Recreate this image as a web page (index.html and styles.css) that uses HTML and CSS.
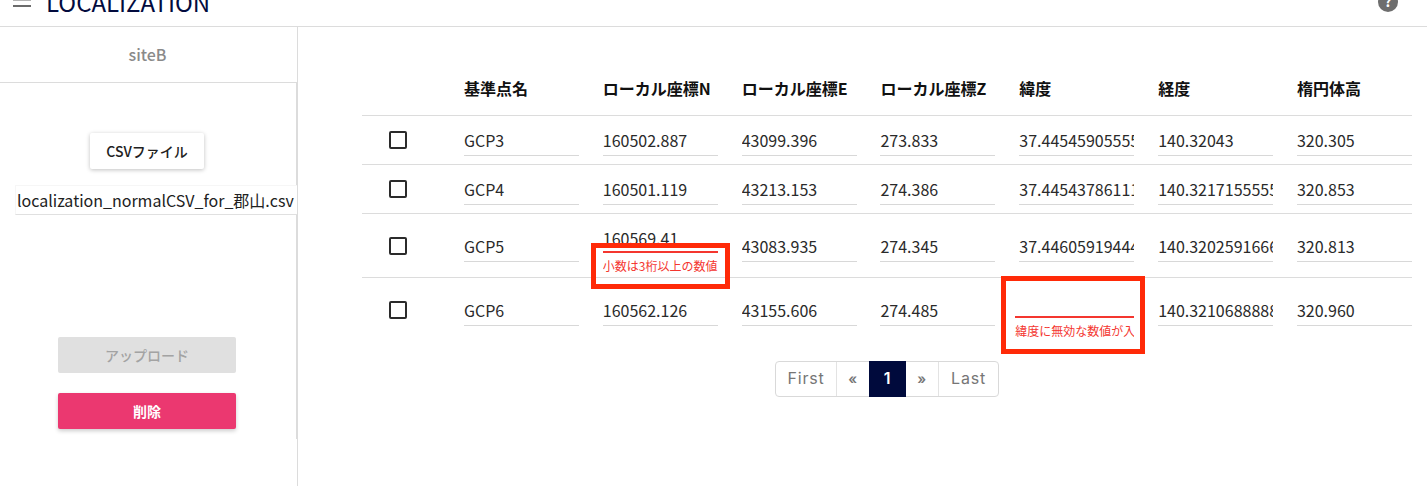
FILE: index.html
```html
<!DOCTYPE html>
<html lang="ja">
<head>
<meta charset="utf-8">
<title>Localization</title>
<link rel="stylesheet" href="styles.css">
</head>
<body>
<header class="topbar">
  <svg class="menu-icon" width="18" height="9" viewBox="0 0 18 9"><path d="M0 0h18v1.5H0zM0 6h18v2H0z" fill="#6b6b6b"/></svg>
  <h1 class="title">LOCALIZATION</h1>
  <svg class="help-icon" width="20" height="20" viewBox="0 0 20 20"><circle cx="10" cy="10" r="10" fill="#6e6e6e"/><text x="10" y="15" text-anchor="middle" class="help-mark">?</text></svg>
</header>
<div class="layout">
  <aside class="sidebar">
    <div class="site-name">siteB</div>
    <div class="side-body">
      <button class="btn-file">CSVファイル</button>
      <div class="file-name">localization_normalCSV_for_郡山.csv</div>
      <button class="btn-wide btn-upload">アップロード</button>
      <button class="btn-wide btn-delete">削除</button>
    </div>
  </aside>
  <main class="main">
    <table class="grid">
      <thead>
        <tr><th class="check-col"></th><th>基準点名</th><th>ローカル座標N</th><th>ローカル座標E</th><th>ローカル座標Z</th><th>緯度</th><th>経度</th><th>楕円体高</th></tr>
      </thead>
      <tbody>
        <tr>
          <td class="check-col"><span class="check"></span></td>
          <td><div class="field">GCP3</div></td><td><div class="field">160502.887</div></td><td><div class="field">43099.396</div></td><td><div class="field">273.833</div></td><td><div class="field">37.44545905555</div></td><td><div class="field">140.32043</div></td><td><div class="field">320.305</div></td>
        </tr>
        <tr>
          <td class="check-col"><span class="check"></span></td>
          <td><div class="field">GCP4</div></td><td><div class="field">160501.119</div></td><td><div class="field">43213.153</div></td><td><div class="field">274.386</div></td><td><div class="field">37.44543786111</div></td><td><div class="field">140.32171555555</div></td><td><div class="field">320.853</div></td>
        </tr>
        <tr class="row-tall">
          <td class="check-col"><span class="check"></span></td>
          <td><div class="field">GCP5</div></td>
          <td class="has-error"><div class="field field-error field-raised">160569.41</div><div class="error-msg">小数は3桁以上の数値</div><span class="annot annot-n"></span></td>
          <td><div class="field">43083.935</div></td><td><div class="field">274.345</div></td><td><div class="field">37.44605919444</div></td><td><div class="field">140.32025916666</div></td><td><div class="field">320.813</div></td>
        </tr>
        <tr class="row-tall row-last">
          <td class="check-col"><span class="check"></span></td>
          <td><div class="field">GCP6</div></td><td><div class="field">160562.126</div></td><td><div class="field">43155.606</div></td><td><div class="field">274.485</div></td>
          <td class="has-error"><div class="field field-error field-empty">&nbsp;</div><div class="error-msg error-wide">緯度に無効な数値が入</div><span class="annot annot-lat"></span></td>
          <td><div class="field">140.32106888888</div></td><td><div class="field">320.960</div></td>
        </tr>
      </tbody>
    </table>
    <nav class="pager">
      <span class="page page-first">First</span><span class="page page-prev">«</span><span class="page page-on">1</span><span class="page page-next">»</span><span class="page page-last">Last</span>
    </nav>
  </main>
</div>
</body>
</html>
```
FILE: styles.css
```css
* { box-sizing: border-box; }
html, body { margin: 0; height: 486px; overflow: hidden; background: #fff; }
body { font-family: "Noto Sans CJK JP", "Noto Sans", sans-serif; color: #212121; }

.topbar {
  height: 27px;
  border-bottom: 1px solid #dcdcdc;
  display: flex;
  align-items: flex-end;
  padding: 0 29px 0 13px;
  overflow: hidden;
}
.menu-icon { margin-bottom: 18px; }
.title {
  margin: 0 0 12px 15px;
  font-size: 24px;
  line-height: 24px;
  font-weight: 400;
  color: #020b3e;
}
.help-icon { margin-left: auto; margin-bottom: 14px; }
.help-mark { font-size: 14px; font-weight: 700; fill: #fff; }

.layout { display: flex; height: 459px; }
.sidebar { width: 298px; border-right: 1px solid #dcdcdc; flex: none; }
.site-name {
  height: 56px;
  border-bottom: 1px solid #dcdcdc;
  display: flex;
  align-items: center;
  justify-content: center;
  font-size: 16px;
  font-weight: 500;
  color: #8a8a8a;
  padding: 0 2px 1px 0;
}
.side-body {
  height: 356px;
  border-right: 1px solid #dcdcdc;
  display: flex;
  flex-direction: column;
  align-items: center;
}
.btn-file {
  margin: 50px 2px 0 0;
  width: 114px;
  height: 36px;
  border: 0;
  border-radius: 2px;
  background: #fff;
  box-shadow: 0 1px 4px rgba(0,0,0,.25);
  font: 500 14px "Noto Sans CJK JP", sans-serif;
  color: #212121;
}
.file-name {
  margin: 16px -1px 0 0;
  align-self: flex-end;
  width: 282px;
  height: 30px;
  border: 1px solid #f6f6f6;
  border-bottom-color: #e0e0e0;
  border-right: 0;
  background: #fff;
  font-size: 16px;
  line-height: 28px;
  padding-left: 1px;
  white-space: nowrap;
  overflow: hidden;
  position: relative;
}
.btn-wide {
  display: block;
  width: 178px;
  height: 36px;
  margin-right: 2px;
  border: 0;
  border-radius: 2px;
  font: 500 14px "Noto Sans CJK JP", sans-serif;
}
.btn-upload { margin-top: 122px; background: #e0e0e0; color: #a3a3a3; }
.btn-delete { margin-top: 20px; background: #eb3870; color: #fff; font-weight: 700; box-shadow: 0 2px 4px rgba(0,0,0,.2); }

.main { flex: 1; padding: 36px 15px 0 64px; }
.grid { width: 1050px; border-collapse: collapse; table-layout: fixed; }
.grid th {
  height: 52px;
  width: 138.83px;
  padding: 0 0 1px 12px;
  text-align: left;
  font-size: 16px;
  font-weight: 700;
  color: #111;
  border-bottom: 1px solid #dcdcdc;
}
.grid th.check-col { width: 90px; }
.grid th:last-child { width: 127px; }
.grid td {
  padding: 0 12px;
  border-bottom: 1px solid #dcdcdc;
  height: 49px;
  vertical-align: top;
  position: relative;
}
.grid td:last-child { padding-right: 0; }
.row-tall td { height: 64px; }
.row-last td { border-bottom: 0; }
.grid td.check-col { padding: 15px 0 0 27px; }
.row-tall td.check-col { padding-top: 23px; }
.check { display: block; width: 18px; height: 18px; border: 2px solid #2b2b2b; border-radius: 2px; }
.field {
  margin-top: 11px;
  width: 115px;
  height: 29px;
  border-bottom: 1px solid #d8d8d8;
  font-size: 16px;
  line-height: 27px;
  white-space: nowrap;
  overflow: hidden;
  color: #2a2a2a;
}
.row-tall .field { margin-top: 19px; }
.row-tall .field-raised { margin-top: 9px; height: 30px; line-height: 31px; overflow: visible; }
.field-error { border-bottom: 2px solid #f4362f; }
.row-tall .field-empty { margin: 11px 0 0 -4px; width: 119px; }
.error-msg {
  margin-top: 6px;
  font-size: 12px;
  line-height: 14px;
  width: 115px;
  white-space: nowrap;
  overflow: hidden;
  color: #f4362f;
}
.error-wide { margin-left: -4px; width: 119px; }
.annot { position: absolute; border: 5px solid #ff2a08; pointer-events: none; }
.annot-n { left: 0; top: 29px; width: 139px; height: 46px; }
.annot-lat { left: -6px; top: -2px; width: 144px; height: 78px; }

.pager { display: flex; margin: 20px 0 0 413px; width: max-content; border: 1px solid #d9d9d9; border-radius: 4px; height: 36px; font-family: "Inter", sans-serif; }
.page {
  display: flex;
  align-items: center;
  justify-content: center;
  padding-bottom: 2px;
  font-size: 16px;
  letter-spacing: 0.8px;
  color: #767676;
  border-right: 1px solid #e3e3e3;
}
.page-first { width: 61px; }
.page-prev { width: 32px; border-right: 0; font-weight: 600; font-size: 14px; }
.page-on { width: 37px; margin: -1px 0; background: #000a3c; color: #fff; border-right: 0; font-weight: 600; }
.page-next { width: 33px; font-weight: 600; font-size: 14px; }
.page-last { width: 59px; border-right: 0; }
```
